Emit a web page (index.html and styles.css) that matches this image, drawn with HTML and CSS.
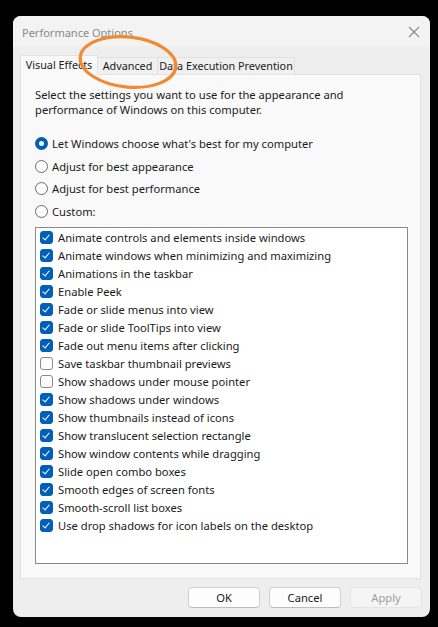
FILE: index.html
```html
<!DOCTYPE html>
<html>
<head>
<meta charset="utf-8">
<link rel="stylesheet" href="styles.css">
</head>
<body>
<div class="dialog">
  <div class="titlebar">
    <span class="title">Performance Options</span>
    <svg class="close" width="12" height="12" viewBox="0 0 12 12"><path d="M1 1L11 11M11 1L1 11" stroke="#8a8a8a" stroke-width="1.1" fill="none"/></svg>
  </div>
  <div class="tabs">
    <div class="tab active t-ve">Visual Effects</div>
    <div class="tab t-adv">Advanced</div>
    <div class="tab t-dep">Data Execution Prevention</div>
  </div>
  <div class="panel">
    <p class="intro">Select the settings you want to use for the appearance and performance of Windows on this computer.</p>
    <div class="radios">
      <label class="radio"><span class="rb on"></span>Let Windows choose what's best for my computer</label>
      <label class="radio"><span class="rb"></span>Adjust for best appearance</label>
      <label class="radio"><span class="rb"></span>Adjust for best performance</label>
      <label class="radio"><span class="rb"></span>Custom:</label>
    </div>
    <div class="listbox">
      <div class="item"><span class="cb on"></span>Animate controls and elements inside windows</div>
      <div class="item"><span class="cb on"></span>Animate windows when minimizing and maximizing</div>
      <div class="item"><span class="cb on"></span>Animations in the taskbar</div>
      <div class="item"><span class="cb on"></span>Enable Peek</div>
      <div class="item"><span class="cb on"></span>Fade or slide menus into view</div>
      <div class="item"><span class="cb on"></span>Fade or slide ToolTips into view</div>
      <div class="item"><span class="cb on"></span>Fade out menu items after clicking</div>
      <div class="item"><span class="cb"></span>Save taskbar thumbnail previews</div>
      <div class="item"><span class="cb"></span>Show shadows under mouse pointer</div>
      <div class="item"><span class="cb on"></span>Show shadows under windows</div>
      <div class="item"><span class="cb on"></span>Show thumbnails instead of icons</div>
      <div class="item"><span class="cb on"></span>Show translucent selection rectangle</div>
      <div class="item"><span class="cb on"></span>Show window contents while dragging</div>
      <div class="item"><span class="cb on"></span>Slide open combo boxes</div>
      <div class="item"><span class="cb on"></span>Smooth edges of screen fonts</div>
      <div class="item"><span class="cb on"></span>Smooth-scroll list boxes</div>
      <div class="item"><span class="cb on"></span>Use drop shadows for icon labels on the desktop</div>
    </div>
  </div>
  <div class="buttons">
    <button class="btn">OK</button>
    <button class="btn">Cancel</button>
    <button class="btn disabled">Apply</button>
  </div>
  <svg class="annot" width="110" height="62" viewBox="0 0 110 62"><ellipse cx="55" cy="31" rx="48" ry="25" transform="rotate(6 55 31)" fill="none" stroke="#f28a33" stroke-width="3.2"/></svg>
</div>
</body>
</html>
```
FILE: styles.css
```css
* { box-sizing: border-box; }
html, body { margin: 0; padding: 0; }
body {
  background: #000;
  width: 438px;
  height: 627px;
  overflow: hidden;
  font-family: "Noto Sans", "Open Sans", sans-serif;
  font-size: 11.2px;
  color: #1a1a1a;
}
.dialog {
  position: relative;
  margin: 16px 0 0 13px;
  width: 417px;
  height: 601px;
  background: #eeeeee;
  border-radius: 8px;
  display: flex;
  flex-direction: column;
}
.titlebar {
  height: 30px;
  background: #f3f3f3;
  border-radius: 8px 8px 0 0;
  display: flex;
  align-items: center;
  justify-content: space-between;
  padding: 2px 10px 0 9px;
}
.title { color: #8a8a8a; font-size: 11px; }
.close { display: block; }
.tabs {
  display: flex;
  align-items: flex-end;
  margin: 9px 0 0 7px;
  height: 19px;
  position: relative;
  z-index: 1;
}
.tab {
  height: 17px;
  padding: 0;
  border: 1px solid #e2e2e2;
  border-bottom: none;
  background: #f0f0f0;
  line-height: 16px;
  margin-left: -1px;
  font-size: 10.8px;
  text-align: center;
  white-space: nowrap;
}
.tab.active {
  height: 20px;
  margin-bottom: -1px;
  margin-left: 0;
  background: #f9f9f9;
  line-height: 17px;
}
.t-ve { width: 78px; }
.t-adv { width: 61px; }
.t-dep { width: 138px; }
.panel {
  margin: 0 9px 0 7px;
  height: 505px;
  background: #f9f9f9;
  border: 1px solid #e2e2e2;
  padding: 12px 12px 0 14px;
}
.intro {
  margin: 0;
  line-height: 15px;
  width: 330px;
}
.radios {
  margin-top: 15px;
  display: flex;
  flex-direction: column;
}
.radio {
  display: flex;
  align-items: center;
  height: 22.7px;
}
.rb {
  width: 13px;
  height: 13px;
  border-radius: 50%;
  border: 1px solid #6b6b6b;
  background: #fdfdfd;
  margin-right: 4px;
  flex: none;
}
.rb.on {
  border: 4px solid #005fb8;
  background: #fff;
}
.listbox {
  margin-top: 4px;
  height: 337px;
  background: #fff;
  border: 1px solid #8a8a8a;
  padding: 1px 4px;
}
.item {
  display: flex;
  align-items: center;
  height: 18px;
}
.cb {
  width: 13px;
  height: 13px;
  border-radius: 3px;
  border: 1px solid #8a8a8a;
  background: #fcfcfc;
  margin-right: 5px;
  flex: none;
  position: relative;
}
.cb.on {
  background: #005fb8;
  border-color: #005fb8;
}
.cb.on::after {
  content: "";
  position: absolute;
  left: 3px;
  top: 1px;
  width: 3px;
  height: 6px;
  border: solid #fff;
  border-width: 0 1.2px 1.2px 0;
  transform: rotate(40deg);
}
.buttons {
  display: flex;
  justify-content: flex-end;
  gap: 9px;
  padding: 8px 8px 0 0;
}
.btn {
  width: 72px;
  height: 21px;
  font: inherit;
  color: #1a1a1a;
  background: #fdfdfd;
  border: 1px solid #d0d0d0;
  border-bottom-color: #bdbdbd;
  border-radius: 4px;
  padding: 0;
}
.btn.disabled {
  color: #a0a0a0;
  background: #f5f5f5;
  border-color: #e5e5e5;
}
.annot {
  position: absolute;
  z-index: 5;
  left: 60px;
  top: 15px;
}
```
